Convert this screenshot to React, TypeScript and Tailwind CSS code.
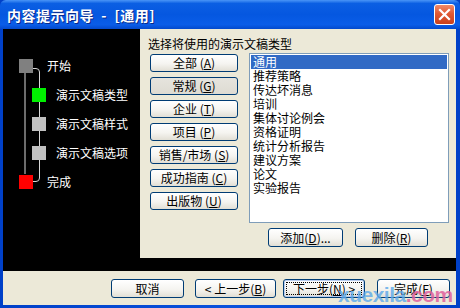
import React from 'react';

const FONT = "font-['Noto_Sans_CJK_SC','Noto_Sans',sans-serif]";

interface XpButtonProps {
  label: string;
  accel: string;
  before?: string;
  after?: string;
  width: string;
  height?: string;
  pressed?: boolean;
  isDefault?: boolean;
  gap?: boolean;
}

const XpButton: React.FC<XpButtonProps> = ({ label, accel, before, after, width, height = 'h-[18px]', pressed, isDefault, gap }) => {
  const bg = pressed
    ? 'bg-[linear-gradient(180deg,#e6e4dd_0%,#dedbd2_100%)]'
    : 'bg-[linear-gradient(180deg,#ffffff_0%,#f5f4f0_55%,#e2dfd5_100%)]';
  const content = (
    <span className="whitespace-nowrap">
      {before}
      {label}
      {gap ? ' ' : ''}(<span className="underline underline-offset-1">{accel}</span>){after}
    </span>
  );
  return (
    <button
      className={`${width} ${height} ${bg} shrink-0 border border-[#003c74] rounded-[3px] text-[12px] leading-[14px] text-black flex items-stretch justify-center p-[2px] ${
        isDefault ? 'shadow-[inset_0_0_0_1px_#b8cdf0]' : ''
      }`}
    >
      <span className={`flex-1 flex items-center justify-center ${isDefault ? 'border border-dotted border-black' : ''}`}>
        {content}
      </span>
    </button>
  );
};

const categories = [
  { label: '全部', accel: 'A' },
  { label: '常规', accel: 'G', pressed: true },
  { label: '企业', accel: 'T' },
  { label: '项目', accel: 'P' },
  { label: '销售/市场', accel: 'S' },
  { label: '成功指南', accel: 'C' },
  { label: '出版物', accel: 'U' },
];

const templates = ['通用', '推荐策略', '传达坏消息', '培训', '集体讨论例会', '资格证明', '统计分析报告', '建议方案', '论文', '实验报告'];

const steps = [
  { name: '开始', color: 'bg-[#808080]', sub: false },
  { name: '演示文稿类型', color: 'bg-[#00f000]', sub: true },
  { name: '演示文稿样式', color: 'bg-[#c0c0c0]', sub: true },
  { name: '演示文稿选项', color: 'bg-[#c0c0c0]', sub: true },
  { name: '完成', color: 'bg-[#ff0000]', sub: false },
];

const App: React.FC = () => {
  return (
    <div className={`${FONT} relative w-[460px] h-[308px] overflow-hidden flex flex-col bg-[linear-gradient(90deg,#0040c8_0%,#0a52dc_50%,#0040c8_100%)] pl-[3px] pr-[4px] pb-[3px]`}>
      {/* title bar */}
      <div className="-ml-[3px] -mr-[4px] h-[29px] shrink-0 flex items-center justify-between pl-[7px] pr-[5px] rounded-t-[6px] bg-[linear-gradient(180deg,#4a95f7_0%,#0b5fe3_12%,#0557e0_50%,#0a5de8_85%,#0349cc_100%)]">
        <span className="text-white font-bold text-[14px] leading-[16px] tracking-[0.5px] whitespace-pre [text-shadow:1px_1px_0_#0b2a8a]">
          {'内容提示向导  -  [通用]'}
        </span>
        <div className="w-[21px] h-[21px] rounded-[3px] border border-white bg-[linear-gradient(180deg,#f08a6a_0%,#e05a34_45%,#c9401c_100%)] flex items-center justify-center">
          <svg width="13" height="13" viewBox="0 0 13 13">
            <path d="M2 2 L11 11 M11 2 L2 11" stroke="#fff" strokeWidth="2.2" strokeLinecap="square" />
          </svg>
        </div>
      </div>

      {/* main area */}
      <div className="h-[229px] shrink-0 flex">
        {/* left step tree */}
        <div className="relative w-[137px] shrink-0 bg-black pt-[22px] flex flex-col">
          <svg className="absolute inset-0" width="137" height="229">
            <path d="M22 43 V145" stroke="#d8d8d8" strokeWidth="1" fill="none" />
            <path d="M30 39.5 H33 Q36.5 39.5 36.5 43 V149 Q36.5 152.5 33 152.5 H30" stroke="#d8d8d8" strokeWidth="1" fill="none" />
          </svg>
          {steps.map(step => (
            <div
              key={step.name}
              className={`relative h-[29px] flex items-center ${step.sub ? 'pl-[29px] gap-[10px]' : 'pl-[16px] gap-[14px]'}`}
            >
              <div className={`w-[14px] h-[14px] shrink-0 ${step.color}`}></div>
              <span className="text-white text-[12px] leading-[14px] whitespace-nowrap">{step.name}</span>
            </div>
          ))}
        </div>

        {/* right content */}
        <div className="flex-1 bg-[#ece9d8] flex flex-col pt-[8px]">
          <div className="pl-[8px] text-[12px] leading-[14px] text-black">选择将使用的演示文稿类型</div>
          <div className="mt-[2px] pl-[10px] flex">
            <div className="w-[88px] pt-[1px] flex flex-col gap-[5px]">
              {categories.map(c => (
                <XpButton key={c.label} label={c.label} accel={c.accel} pressed={c.pressed} width="w-[88px]" gap />
              ))}
            </div>
            <div className="ml-[11px] w-[200px] flex flex-col">
              <div className="h-[170px] border border-[#7f9db9] bg-white p-[1px] flex flex-col">
                {templates.map((t, i) => (
                  <div
                    key={t}
                    className={`h-[14px] leading-[14px] text-[12px] pl-[2px] ${i === 0 ? 'bg-[#316ac5] text-white' : 'text-black'}`}
                  >
                    {t}
                  </div>
                ))}
              </div>
              <div className="mt-[5px] pl-[19px] flex gap-[12px]">
                <XpButton label="添加" accel="D" after="..." width="w-[75px]" height="h-[19px]" />
                <XpButton label="删除" accel="R" width="w-[73px]" height="h-[19px]" />
              </div>
            </div>
          </div>
        </div>
      </div>

      {/* black separator strip */}
      <div className="h-[13px] shrink-0 bg-black"></div>

      {/* footer */}
      <div className="flex-1 bg-[#ece9d8] pt-[8px] pr-[6px] flex justify-end items-start">
        <button className="w-[73px] h-[19px] shrink-0 border border-[#003c74] rounded-[3px] text-[12px] leading-[14px] text-black bg-[linear-gradient(180deg,#ffffff_0%,#f5f4f0_55%,#e2dfd5_100%)]">
          取消
        </button>
        <div className="ml-[11px]">
          <XpButton label="上一步" accel="B" before="< " width="w-[81px]" height="h-[19px]" />
        </div>
        <div className="ml-[7px]">
          <XpButton label="下一步" accel="N" after=" >" width="w-[82px]" height="h-[19px]" isDefault />
        </div>
        <div className="ml-[12px]">
          <XpButton label="完成" accel="F" width="w-[73px]" height="h-[19px]" />
        </div>
      </div>

      {/* watermark */}
      <div className="absolute left-[338px] top-[284px] font-['Liberation_Sans',sans-serif] font-bold text-[21px] leading-[21px] tracking-[-0.5px] pointer-events-none">
        <span className="text-[#5aa8ea]/80">xuexila</span>
        <span className="text-[#e0609c]/85">.com</span>
      </div>
    </div>
  );
};

export default App;
